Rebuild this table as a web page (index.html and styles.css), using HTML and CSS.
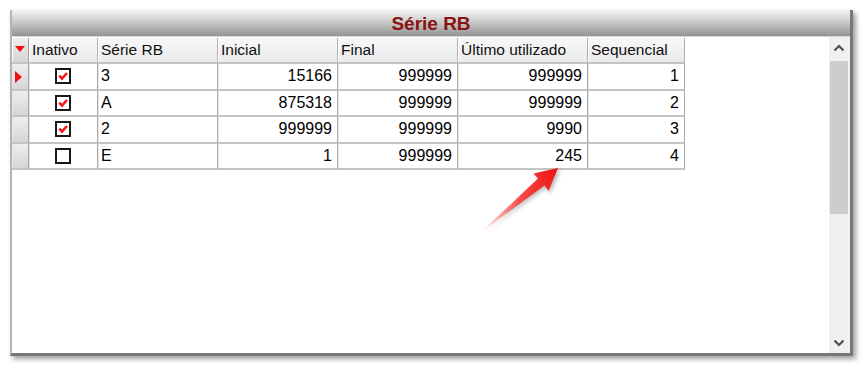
FILE: index.html
```html
<!DOCTYPE html>
<html lang="pt">
<head>
<meta charset="utf-8">
<title>Série RB</title>
<link rel="stylesheet" href="styles.css">
</head>
<body>
<div class="panel">
  <div class="titlebar">Série RB</div>
  <div class="content">
    <div class="gridarea">
      <table class="grid">
        <colgroup>
          <col class="c-ind"><col class="c-inat"><col class="c-serie"><col class="c-ini"><col class="c-fin"><col class="c-ult"><col class="c-seq">
        </colgroup>
        <thead>
          <tr>
            <th class="ind"><span class="tri-down"></span></th>
            <th>Inativo</th>
            <th>Série RB</th>
            <th>Inicial</th>
            <th>Final</th>
            <th>Último utilizado</th>
            <th>Sequencial</th>
          </tr>
        </thead>
        <tbody>
          <tr>
            <td class="ind"><span class="tri-right"></span></td>
            <td class="chk"><span class="box"><svg viewBox="0 0 12 12"><path d="M2.3 5.6 L5 8.6 L10 3" /></svg></span></td>
            <td>3</td>
            <td class="num">15166</td>
            <td class="num">999999</td>
            <td class="num">999999</td>
            <td class="num">1</td>
          </tr>
          <tr>
            <td class="ind"></td>
            <td class="chk"><span class="box"><svg viewBox="0 0 12 12"><path d="M2.3 5.6 L5 8.6 L10 3" /></svg></span></td>
            <td>A</td>
            <td class="num">875318</td>
            <td class="num">999999</td>
            <td class="num">999999</td>
            <td class="num">2</td>
          </tr>
          <tr>
            <td class="ind"></td>
            <td class="chk"><span class="box"><svg viewBox="0 0 12 12"><path d="M2.3 5.6 L5 8.6 L10 3" /></svg></span></td>
            <td>2</td>
            <td class="num">999999</td>
            <td class="num">999999</td>
            <td class="num">9990</td>
            <td class="num">3</td>
          </tr>
          <tr>
            <td class="ind"></td>
            <td class="chk"><span class="box"></span></td>
            <td>E</td>
            <td class="num">1</td>
            <td class="num">999999</td>
            <td class="num">245</td>
            <td class="num">4</td>
          </tr>
        </tbody>
      </table>
    </div>
    <div class="scrollbar">
      <div class="sb-btn"><svg viewBox="0 0 12 8"><path d="M1.5 6.5 L6 2 L10.5 6.5"/></svg></div>
      <div class="sb-track"><div class="sb-thumb"></div></div>
      <div class="sb-btn"><svg viewBox="0 0 12 8"><path d="M1.5 1.5 L6 6 L10.5 1.5"/></svg></div>
    </div>
  </div>
</div>
<svg class="arrow" viewBox="470 160 100 85" width="100" height="85">
  <defs>
    <linearGradient id="ag" x1="480" y1="233" x2="558" y2="168" gradientUnits="userSpaceOnUse">
      <stop offset="0" stop-color="#ff3030" stop-opacity="0"/>
      <stop offset="0.5" stop-color="#ff2a2a" stop-opacity="0.8"/>
      <stop offset="1" stop-color="#f01010"/>
    </linearGradient>
  </defs>
  <polygon points="558,168 548.5,191 544.5,185.5 480,233 538,178.5 533.5,173.5" fill="url(#ag)"/>
</svg>
</body>
</html>
```
FILE: styles.css
```css
* { box-sizing: border-box; }
html, body { margin: 0; padding: 0; background: #ffffff; }
body {
  position: relative;
  width: 865px;
  height: 369px;
  overflow: hidden;
  font-family: "Liberation Sans", Arial, sans-serif;
}
.panel {
  margin: 10px 0 0 10px;
  width: 843px;
  height: 346px;
  background: #ffffff;
  border-left: 2px solid #b4b4b4;
  border-right: 3px solid #787878;
  border-bottom: 3px solid #787878;
  box-shadow: 3px 3px 5px rgba(0, 0, 0, 0.38);
  display: flex;
  flex-direction: column;
}
.titlebar {
  height: 27px;
  flex: none;
  background: linear-gradient(to bottom, #f2f2f2 0%, #dadada 30%, #b2b2b2 70%, #929292 100%);
  color: #8a1212;
  font-weight: bold;
  font-size: 19px;
  line-height: 27px;
  text-align: center;
  border-bottom: 1px solid #d8d8d8;
}
.content {
  flex: 1;
  display: flex;
  min-height: 0;
}
.gridarea {
  flex: 1;
  background: #ffffff;
  padding-top: 1px;
}
.grid {
  table-layout: fixed;
  width: 673px;
  border-collapse: separate;
  border-spacing: 0;
  font-size: 16px;
  color: #000;
}
.c-ind { width: 17px; }
.c-inat { width: 69px; }
.c-serie { width: 120px; }
.c-ini { width: 120px; }
.c-fin { width: 120px; }
.c-ult { width: 130px; }
.c-seq { width: 97px; }
.grid th {
  height: 26px;
  padding: 0 0 0 3px;
  font-weight: normal;
  font-size: 15.5px;
  text-align: left;
  background: linear-gradient(to bottom, #f8f8f8, #eaeaea);
  border-right: 1px solid #b0b0b0;
  border-bottom: 2px solid #c4c4c4;
  box-shadow: inset 1px 0 0 #ffffff;
  color: #101010;
  white-space: nowrap;
}
.grid td {
  height: 26.5px;
  padding: 0 3px 0 3px;
  border-right: 1px solid #a8a8a8;
  border-bottom: 2px solid #c4c4c4;
  box-shadow: inset 1px 0 0 #e6e6e6;
  white-space: nowrap;
}
.grid td.num { text-align: right; padding-right: 5px; }
.grid td.chk { text-align: center; padding: 0; }
.grid .ind {
  padding: 0;
  text-align: center;
  background: linear-gradient(to bottom, #eeeeee, #d6d6d6);
  border-right: 1px solid #a0a0a0;
}
.tri-down {
  display: inline-block;
  width: 0; height: 0;
  border-left: 5px solid transparent;
  border-right: 5px solid transparent;
  border-top: 6px solid #f01010;
  vertical-align: middle;
  margin-top: -4px;
}
.tri-right {
  display: inline-block;
  width: 0; height: 0;
  border-top: 6px solid transparent;
  border-bottom: 6px solid transparent;
  border-left: 7px solid #f01010;
  vertical-align: middle;
  margin-left: -4px;
}
.box {
  display: inline-block;
  width: 16px;
  height: 16px;
  border: 2px solid #1a1a1a;
  background: #ffffff;
  vertical-align: middle;
  margin-top: -2px;
}
.box svg {
  display: block;
  width: 12px;
  height: 12px;
}
.box svg path {
  fill: none;
  stroke: #f01818;
  stroke-width: 2.6;
}
.scrollbar {
  width: 21px;
  flex: none;
  background: #f0f0f0;
  display: flex;
  flex-direction: column;
  padding: 0 2px 0 1px;
}
.sb-btn {
  height: 21px;
  flex: none;
  display: flex;
  align-items: center;
  justify-content: center;
}
.sb-btn svg { width: 12px; height: 8px; }
.sb-btn svg path { fill: none; stroke: #505050; stroke-width: 2.2; }
.sb-track { flex: 1; padding-top: 3px; }
.sb-thumb {
  height: 153px;
  background: #cdcdcd;
}
.arrow {
  position: absolute;
  left: 470px;
  top: 160px;
  filter: drop-shadow(2px 2px 2px rgba(0, 0, 0, 0.3));
}
```
